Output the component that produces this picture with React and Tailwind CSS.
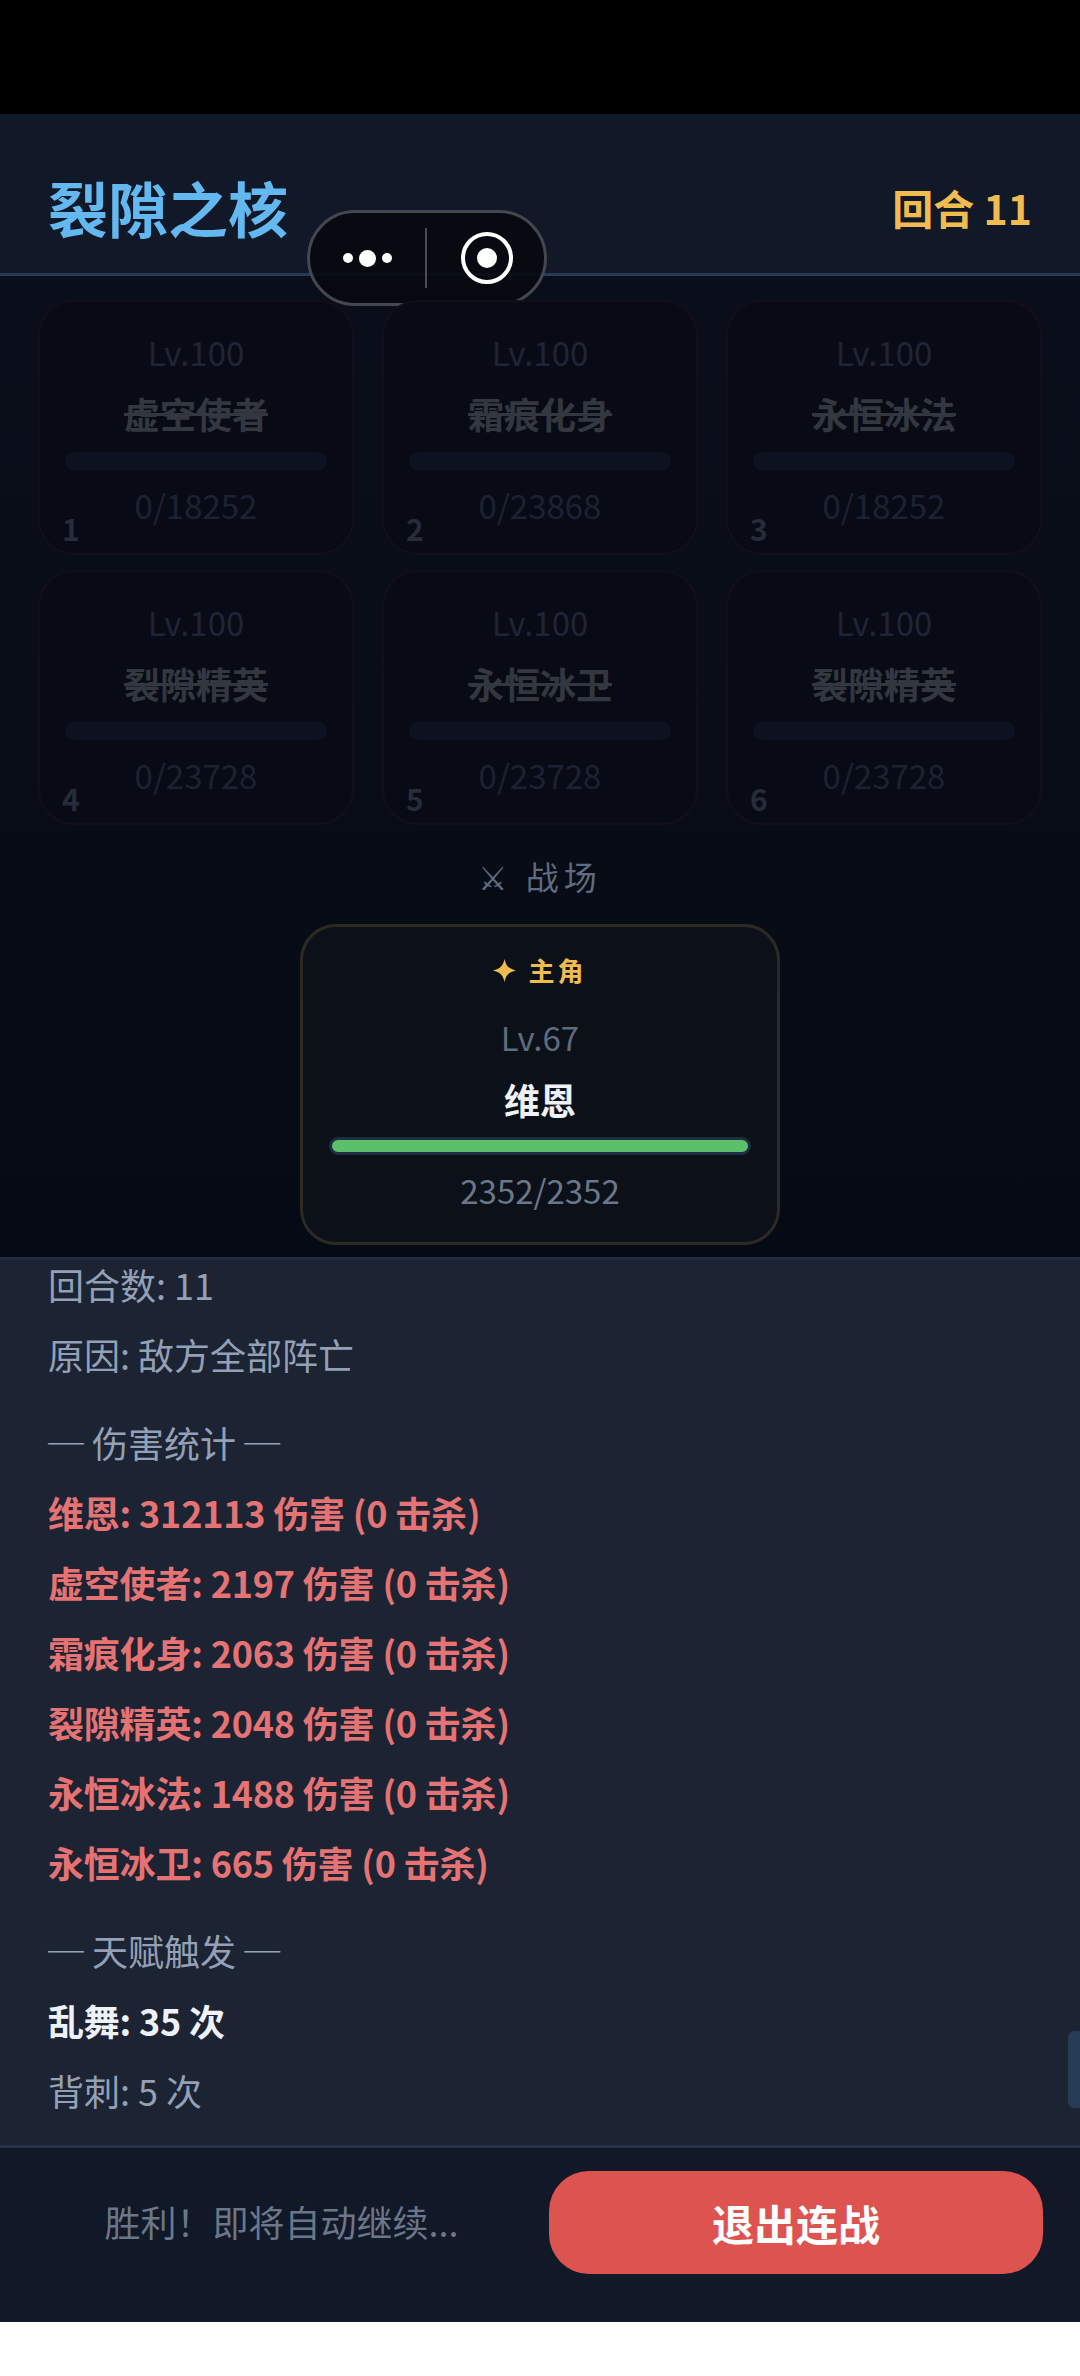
import React from 'react';

const enemies = [
  { id: 1, name: '虚空使者', hp: '0/18252' },
  { id: 2, name: '霜痕化身', hp: '0/23868' },
  { id: 3, name: '永恒冰法', hp: '0/18252' },
  { id: 4, name: '裂隙精英', hp: '0/23728' },
  { id: 5, name: '永恒冰卫', hp: '0/23728' },
  { id: 6, name: '裂隙精英', hp: '0/23728' },
];

const damage = [
  '维恩: 312113 伤害 (0 击杀)',
  '虚空使者: 2197 伤害 (0 击杀)',
  '霜痕化身: 2063 伤害 (0 击杀)',
  '裂隙精英: 2048 伤害 (0 击杀)',
  '永恒冰法: 1488 伤害 (0 击杀)',
  '永恒冰卫: 665 伤害 (0 击杀)',
];

function EnemyCard({ enemy }) {
  return (
    <div className="relative h-[255px] rounded-[36px] border-[2px] border-[#130e1a] bg-[#080b16] px-[25px] flex flex-col items-center">
      <div className="mt-[26px] text-[33px] leading-[48px] text-[#1f2536]">Lv.100</div>
      <div className="mt-[11px] text-[36px] leading-[52px] font-bold text-[#33373f] line-through">{enemy.name}</div>
      <div className="mt-[13px] h-[18px] w-full rounded-full bg-[#0c1220]" />
      <div className="mt-[11px] text-[33px] leading-[48px] text-[#1c2232]">{enemy.hp}</div>
      <div className="absolute left-[22px] bottom-[5px] text-[30px] leading-[40px] font-bold text-[#262c3a]">{enemy.id}</div>
    </div>
  );
}

export default function App() {
  return (
    <div lang="zh-CN" className="relative w-[1080px] h-[2376px] bg-white flex flex-col overflow-hidden font-['Noto_Sans_CJK_SC','Noto_Sans',sans-serif]">
      <div className="h-[114px] bg-black shrink-0" />

      <header className="h-[162px] shrink-0 bg-[#111827] border-b-[3px] border-b-[#263c55] flex items-center justify-between px-[48px] pt-[26px]">
        <h1 className="text-[60px] leading-[80px] font-bold text-[#63b8f0]">裂隙之核</h1>
        <div className="text-[41px] leading-[56px] font-bold text-[#f0bc50]">回合 11</div>
      </header>

      {/* capsule from the host app */}
      <div className="absolute left-[307px] top-[210px] w-[240px] h-[96px] rounded-full border-[3px] border-[#45474e] bg-[#07090f]/90 flex items-center">
        <div className="w-[115px] flex items-center justify-center gap-[6px]">
          <span className="w-[10px] h-[10px] rounded-full bg-white" />
          <span className="w-[17px] h-[17px] rounded-full bg-white" />
          <span className="w-[10px] h-[10px] rounded-full bg-white" />
        </div>
        <div className="w-[2px] h-[60px] bg-[#4a4c52]" />
        <div className="flex-1 flex items-center justify-center pl-[3px]">
          <svg width="52" height="52" viewBox="0 0 52 52">
            <circle cx="26" cy="26" r="24" fill="none" stroke="#fff" strokeWidth="4" />
            <circle cx="26" cy="26" r="10" fill="#fff" />
          </svg>
        </div>
      </div>

      <main className="h-[981px] shrink-0 bg-gradient-to-b from-[#0a0e1a] to-[#060a14] pt-[24px] px-[38px] flex flex-col items-center">
        <div className="w-full grid grid-cols-3 gap-x-[28px] gap-y-[15px]">
          {enemies.map((e) => <EnemyCard key={e.id} enemy={e} />)}
        </div>
        <div className="mt-[27px] text-[33px] leading-[48px] tracking-[5px] text-[#5f6b7e]">⚔ 战场</div>
        <div className="mt-[24px] w-[480px] h-[321px] rounded-[36px] border-[3px] border-[#2c2a22] bg-[#0c1018] px-[26px] flex flex-col items-center">
          <div className="mt-[23px] flex items-center gap-[12px] text-[26px] leading-[40px] font-bold tracking-[3px] text-[#f0bc50]">
            <svg width="23" height="23" viewBox="0 0 23 23" fill="#f0bc50">
              <path d="M11.5 0C13 7 16 10 23 11.5C16 13 13 16 11.5 23C10 16 7 13 0 11.5C7 10 10 7 11.5 0Z" />
            </svg>
            <span>主角</span>
          </div>
          <div className="mt-[23px] text-[33px] leading-[48px] text-[#5f6b7e]">Lv.67</div>
          <div className="mt-[12px] text-[36px] leading-[52px] font-bold text-[#eef1f6]">维恩</div>
          <div className="mt-[12px] h-[18px] w-full rounded-full border-[3px] border-[#1e2d40] bg-[#5bbf6b]" />
          <div className="mt-[11px] text-[33px] leading-[48px] text-[#6b7789]">2352/2352</div>
        </div>
      </main>

      <section className="relative h-[888px] shrink-0 bg-[#1c2333] border-t-[3px] border-t-[#212c40] overflow-hidden pl-[48px] text-[36px] leading-[58px]">
        <div className="-mt-[5px] text-[#94a0b6] mb-[12px]">回合数: 11</div>
        <div className="text-[#94a0b6] mb-[12px]">原因: 敌方全部阵亡</div>
        <div className="text-[#94a0b6] mt-[30px] mb-[12px]">─ 伤害统计 ─</div>
        {damage.map((line, i) => (
          <div key={i} className="text-[#e57373] font-bold tracking-[-0.2px] mb-[12px]">{line}</div>
        ))}
        <div className="text-[#94a0b6] mt-[30px] mb-[12px]">─ 天赋触发 ─</div>
        <div className="text-[#eef1f6] font-bold tracking-[-0.2px] mb-[12px]">乱舞: 35 次</div>
        <div className="text-[#94a0b6]">背刺: 5 次</div>
        <div className="absolute right-0 top-[771px] w-[12px] h-[77px] rounded-l-[6px] bg-[#263c55]" />
      </section>

      <footer className="h-[177px] shrink-0 bg-[#111827] border-t-[3px] border-t-[#263347] flex items-start pt-[23px] pr-[37px]">
        <div className="flex-1 h-[99px] flex items-center justify-center pl-[14px] text-[36px] text-[#6b7789]">胜利！即将自动继续...</div>
        <button className="w-[494px] h-[103px] rounded-[40px] bg-[#dd5350] text-[42px] font-bold text-white">退出连战</button>
      </footer>
    </div>
  );
}
